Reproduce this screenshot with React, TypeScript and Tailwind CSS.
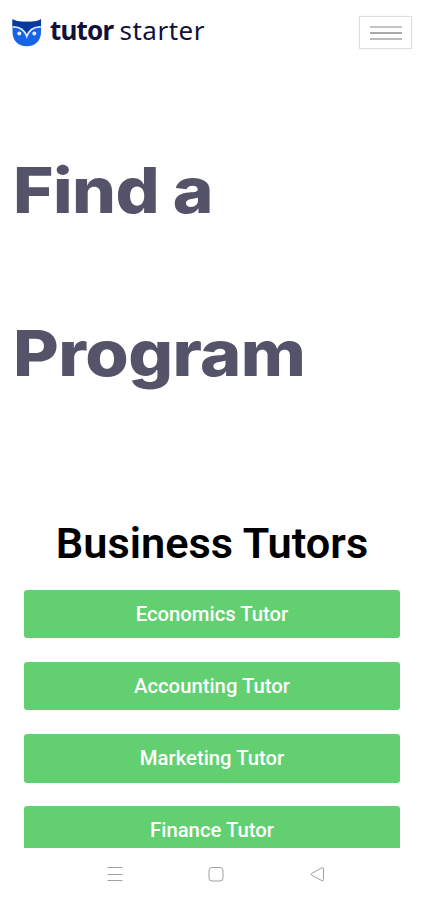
const tutors = [
  "Economics Tutor",
  "Accounting Tutor",
  "Marketing Tutor",
  "Finance Tutor",
];

function OwlLogo() {
  return (
    <svg width="30" height="30" viewBox="0 0 30 30" aria-hidden="true">
      <path
        d="M.5 1.2C5 3.5 10 3.8 14.8 3.8S25 3.5 29 1.2V14c0 8.5-5.5 14.2-14.2 14.2S.5 22.5.5 14Z"
        fill="#1763e8"
      />
      <path
        d="M.5 1.2C5 3.5 10 3.8 14.8 3.8S25 3.5 29 1.2V8.5c-7 0-11 2.5-14.2 9C11.5 11 7.5 8.5.5 8.5Z"
        fill="#073a9c"
      />
      <path
        d="M.8 8.8c7-.3 11.5 2.7 14 9.5 2.5-6.8 7-9.8 14-9.5"
        fill="none"
        stroke="#d9e8ff"
        strokeWidth="1.8"
      />
      <circle cx="7.3" cy="15.5" r="2" fill="#e4f0ff" />
      <circle cx="22.3" cy="15.5" r="2" fill="#e4f0ff" />
    </svg>
  );
}

function Header() {
  return (
    <header className="h-16 shrink-0 flex items-start justify-between pl-[12px] pr-[12px]">
      <div className="flex items-start pt-[18px]">
        <OwlLogo />
        <div className="flex ml-[8px] -mt-[2px] font-['Noto_Sans',sans-serif] text-[26px] leading-[28px] text-[#11103a] whitespace-nowrap">
          <span className="w-[69.5px] font-bold tracking-[-0.8px]">tutor</span>
          <span className="tracking-[0.5px]">starter</span>
        </div>
      </div>
      <button
        aria-label="Menu"
        className="mt-[16px] w-[53px] h-[33px] border border-[#dedede] shadow-[0_0_1px_#dedede] flex flex-col items-center justify-center gap-[4px]"
      >
        <span className="w-8 h-[2px] bg-[#c4c4c4]"></span>
        <span className="w-8 h-[2px] bg-[#a8a8a8]"></span>
        <span className="w-8 h-[2px] bg-[#bcbcbc]"></span>
      </button>
    </header>
  );
}

function NavBar() {
  return (
    <nav className="h-[52px] shrink-0 flex justify-center items-center gap-[85px] pl-[7px] text-[#a0a0a0]">
      <svg width="16" height="16" viewBox="0 0 16 16" stroke="currentColor">
        <path d="M.5 1.5h15M.5 8.5h15M.5 14.5h15" />
      </svg>
      <svg width="16" height="16" viewBox="0 0 16 16" fill="none" stroke="currentColor">
        <rect x="1" y="1.5" width="14" height="13.5" rx="3" />
      </svg>
      <svg width="16" height="16" viewBox="0 0 16 16" fill="none" stroke="currentColor">
        <path d="M13 1.8 2.3 7.6q-1.3.7 0 1.4L13 14.7q1.5.6 1.5-1V2.8q0-1.6-1.5-1Z" />
      </svg>
    </nav>
  );
}

export default function App() {
  return (
    <div className="w-[424px] h-[900px] bg-white overflow-hidden flex flex-col font-[Roboto,sans-serif]">
      <Header />

      <main className="flex-1 min-h-0 overflow-hidden">
        <h1 className="pt-[45px] pl-[12.5px] font-[Inter,sans-serif] font-extrabold text-[63px] leading-[162.5px] text-[#555369]">
          <span className="block w-max origin-left scale-x-[1.1] tracking-[-0.5px] [word-spacing:-1px]">Find a</span>
          <span className="block w-max origin-left scale-x-[1.115] tracking-[-0.5px]">Program</span>
        </h1>

        <section className="pt-[85px] px-6">
          <h2 className="text-center text-[43.3px] leading-[50px] font-semibold text-black whitespace-nowrap">
            Business Tutors
          </h2>
          <div className="mt-[20.5px] flex flex-col gap-[23.5px]">
            {tutors.map((name) => (
              <button
                key={name}
                className="h-[48.7px] shrink-0 rounded-[3px] bg-[#62cf70] text-white text-[20.3px] font-medium"
              >
                {name}
              </button>
            ))}
          </div>
        </section>
      </main>

      <NavBar />
    </div>
  );
}
